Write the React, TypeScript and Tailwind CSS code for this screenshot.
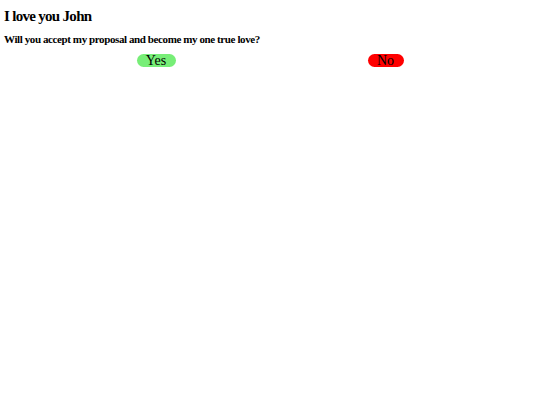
export default function App() {
  return (
    <div className="min-h-screen bg-white px-[4px] pt-[6px] text-black font-['Liberation_Serif',serif]">
      <h1 className="text-[15px] font-bold leading-[20px] tracking-[-0.7px]">I love you John</h1>
      <h2 className="mt-[6px] text-[11px] font-bold leading-[14px] tracking-[-0.4px]">
        Will you accept my proposal and become my one true love?
      </h2>
      <div className="mx-auto mt-[8px] flex w-[267px] justify-between">
        <button className="h-[13px] w-[39px] rounded-full bg-[#77ee77] text-[14px] leading-[13px]">
          Yes
        </button>
        <button className="h-[13px] w-[36px] rounded-full bg-[#ff0000] text-[14px] leading-[13px]">
          No
        </button>
      </div>
    </div>
  );
}
